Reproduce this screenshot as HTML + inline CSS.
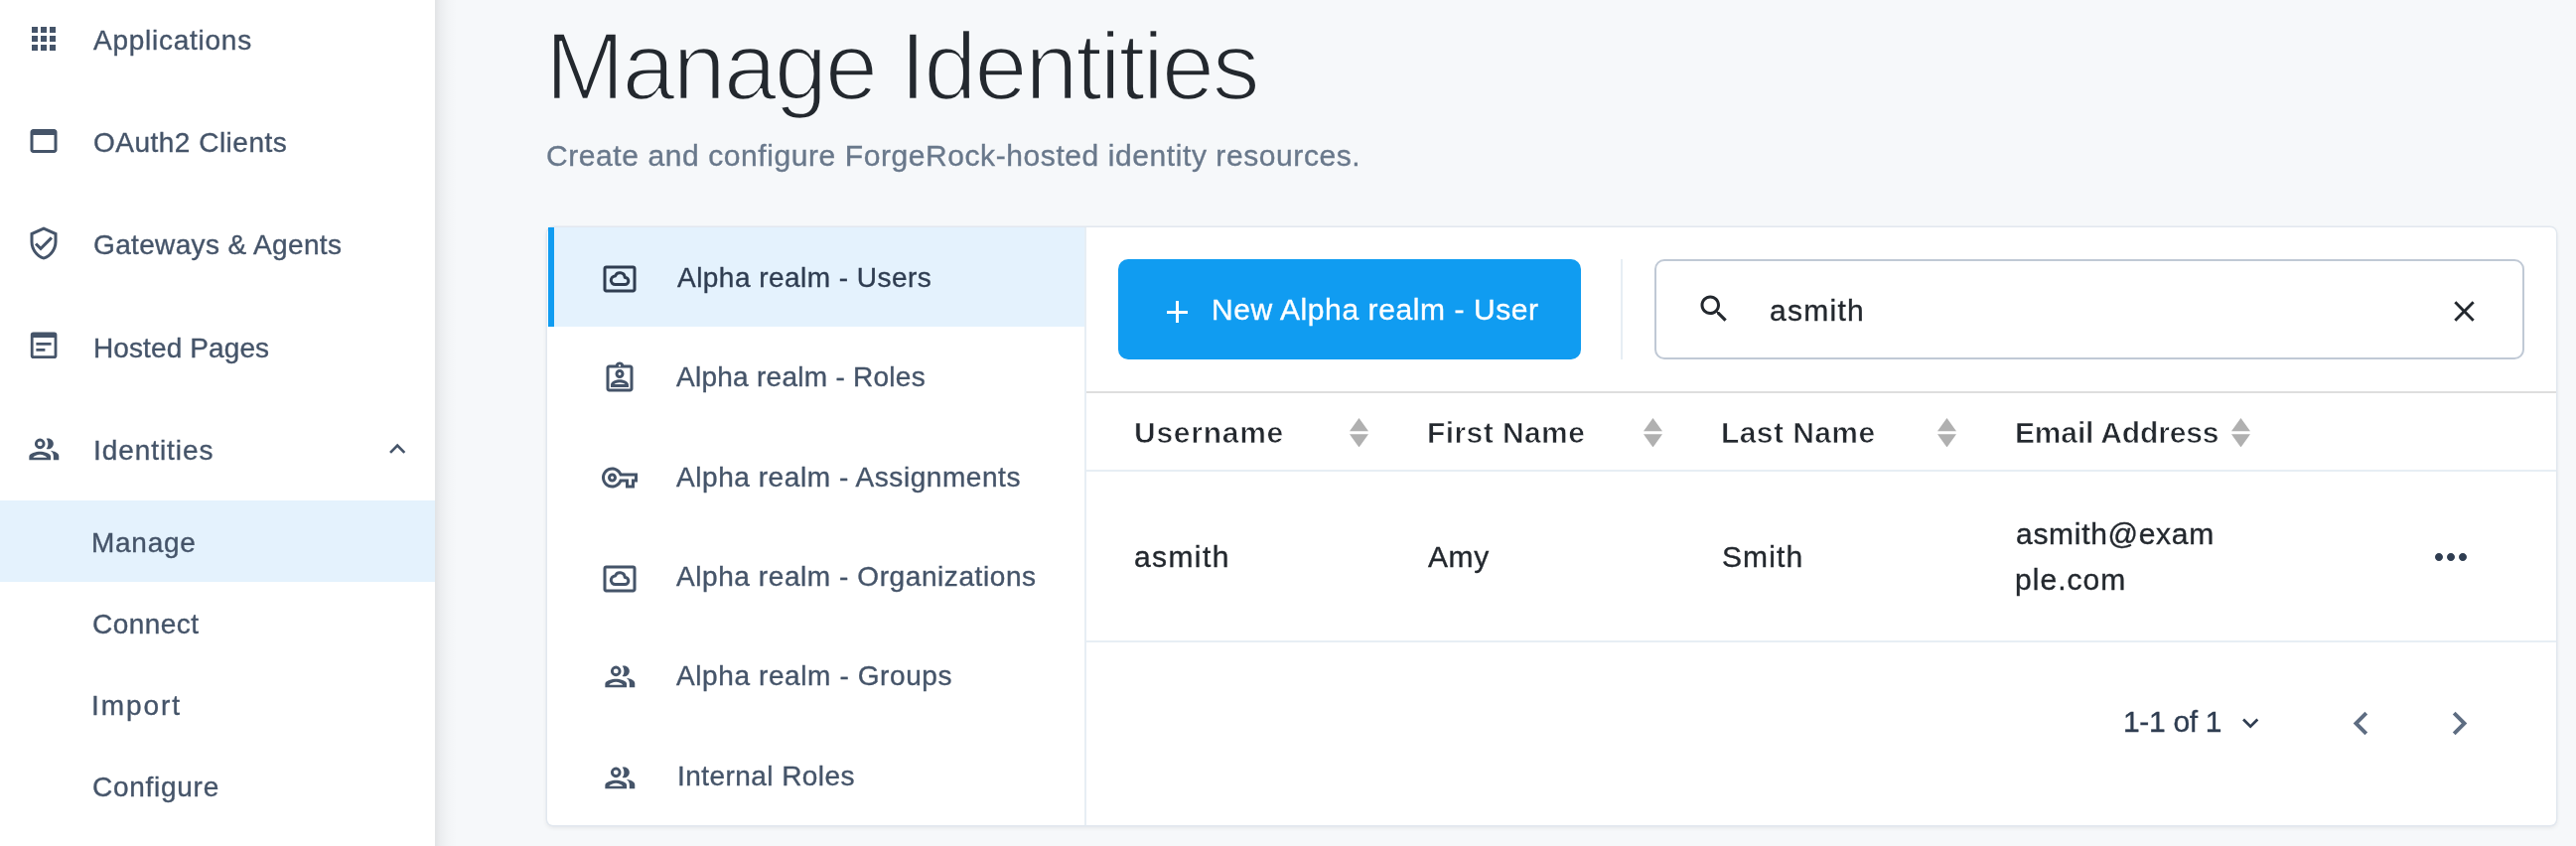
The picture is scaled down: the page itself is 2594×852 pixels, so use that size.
<!DOCTYPE html>
<html><head><meta charset="utf-8"><style>
html,body{margin:0;padding:0;}
body{width:2594px;height:852px;overflow:hidden;position:relative;background:#f6f8fa;font-family:"Liberation Sans", sans-serif;}
svg{display:block;}
</style></head><body>
<div style="position:absolute;left:0px;top:0px;width:438px;height:852px;background:#fff;"></div><div style="position:absolute;left:438px;top:0px;width:22px;height:852px;background:linear-gradient(to right, rgba(0,0,10,0.085), rgba(0,0,10,0.045) 25%, rgba(0,0,10,0.015) 60%, rgba(0,0,10,0) 100%);"></div><div style="position:absolute;left:0px;top:504px;width:438px;height:82px;background:#e4f2fd;"></div><div style="position:absolute;left:94.40px;top:26.80px;font-size:28px;line-height:28px;color:#455469;font-weight:400;letter-spacing:0.745px;white-space:nowrap;will-change:transform;-webkit-text-stroke:0.35px #455469;">Applications</div><div style="position:absolute;left:94.40px;top:130.05px;font-size:28px;line-height:28px;color:#455469;font-weight:400;letter-spacing:0.492px;white-space:nowrap;will-change:transform;-webkit-text-stroke:0.35px #455469;">OAuth2 Clients</div><div style="position:absolute;left:94.00px;top:233.30px;font-size:28px;line-height:28px;color:#455469;font-weight:400;letter-spacing:0.350px;white-space:nowrap;will-change:transform;-webkit-text-stroke:0.35px #455469;">Gateways &amp; Agents</div><div style="position:absolute;left:94.00px;top:336.55px;font-size:28px;line-height:28px;color:#455469;font-weight:400;letter-spacing:0.109px;white-space:nowrap;will-change:transform;-webkit-text-stroke:0.35px #455469;">Hosted Pages</div><div style="position:absolute;left:93.60px;top:439.80px;font-size:28px;line-height:28px;color:#455469;font-weight:400;letter-spacing:0.933px;white-space:nowrap;will-change:transform;-webkit-text-stroke:0.35px #455469;">Identities</div><svg style="position:absolute;left:26px;top:21px;" width="36" height="36" viewBox="0 0 24 24"><path fill="#455469" d="M4 8h4V4H4v4zm6 12h4v-4h-4v4zm-6 0h4v-4H4v4zm0-6h4v-4H4v4zm6 0h4v-4h-4v4zm6-10v4h4V4h-4zm-6 4h4V4h-4v4zm6 6h4v-4h-4v4zm0 6h4v-4h-4v4z"/></svg><svg style="position:absolute;left:25.8px;top:124px;" width="36" height="36" viewBox="0 0 24 24"><path fill="#455469" d="M19 4H5c-1.11 0-2 .9-2 2v12c0 1.1.89 2 2 2h14c1.1 0 2-.9 2-2V6c0-1.1-.89-2-2-2zm0 14H5V8h14v10z"/></svg><svg style="position:absolute;left:26.1px;top:227.1px;" width="36" height="36" viewBox="0 0 24 24"><path fill="#455469" d="M12 1L3 5v6c0 5.55 3.84 10.74 9 12 5.16-1.26 9-6.45 9-12V5l-9-4zm7 10c0 4.52-2.98 8.69-7 9.93-4.02-1.24-7-5.41-7-9.93V6.3l7-3.11 7 3.11V11zm-11.59.59L6 13l4 4 8-8-1.41-1.42L10 14.17z"/></svg><svg style="position:absolute;left:20px;top:320px" width="50" height="50" viewBox="20 320 50 50"><path fill="#455469" fill-rule="evenodd" d="M33.6 334.5H54.6a2.8 2.8 0 0 1 2.8 2.8V358.3a2.8 2.8 0 0 1-2.8 2.8H33.6a2.8 2.8 0 0 1-2.8-2.8V337.3a2.8 2.8 0 0 1 2.8-2.8zM33.6 340.1V358.2H54.6V340.1z"/><path fill="#455469" d="M36.4 345.1H51.6V347.8H36.4zM36.4 351H45.4V353.8H36.4z"/></svg><svg style="position:absolute;left:27.9px;top:435.5px" width="32.64" height="32.64" viewBox="0 0 24 24"><path fill="#455469" fill-rule="evenodd" d="M9 4.1a3.9 3.9 0 1 0 0 7.8a3.9 3.9 0 1 0 0-7.8zM9 6.2a1.8 1.8 0 1 0 0 3.6a1.8 1.8 0 1 0 0-3.6zM15 12c2.21 0 4-1.79 4-4s-1.79-4-4-4c-.47 0-.91.1-1.33.24.83 1.03 1.33 2.34 1.33 3.76s-.5 2.73-1.33 3.76c.42.14.86.24 1.33.24zM1 20v-2.6C1 15 6.3 13.8 9 13.8s8 1.2 8 3.6V20zM3.9 18.2C4.7 17 7 16 9 16s4.3 1 5.1 2.2zM16.67 13.13C18.04 14.06 19 15.32 19 17v3h4v-3c0-2.18-3.57-3.47-6.33-3.87z"/></svg><svg style="position:absolute;left:383.9px;top:435.5px;" width="32.4" height="32.4" viewBox="0 0 24 24"><path fill="#455469" d="M12 8l-6 6 1.41 1.41L12 10.83l4.59 4.58L18 14z"/></svg><div style="position:absolute;left:91.60px;top:532.80px;font-size:28px;line-height:28px;color:#455469;font-weight:400;letter-spacing:0.720px;white-space:nowrap;will-change:transform;-webkit-text-stroke:0.35px #455469;">Manage</div><div style="position:absolute;left:92.60px;top:614.80px;font-size:28px;line-height:28px;color:#455469;font-weight:400;letter-spacing:0.467px;white-space:nowrap;will-change:transform;-webkit-text-stroke:0.35px #455469;">Connect</div><div style="position:absolute;left:91.60px;top:696.80px;font-size:28px;line-height:28px;color:#455469;font-weight:400;letter-spacing:1.920px;white-space:nowrap;will-change:transform;-webkit-text-stroke:0.35px #455469;">Import</div><div style="position:absolute;left:92.60px;top:778.80px;font-size:28px;line-height:28px;color:#455469;font-weight:400;letter-spacing:0.725px;white-space:nowrap;will-change:transform;-webkit-text-stroke:0.35px #455469;">Configure</div><div style="position:absolute;left:549.00px;top:18.94px;font-size:96px;line-height:96px;color:#23282e;font-weight:400;letter-spacing:-2.375px;white-space:nowrap;will-change:transform;-webkit-text-stroke:2.6px #f6f8fa;">Manage Identities</div><div style="position:absolute;left:550.00px;top:142.40px;font-size:30px;line-height:30px;color:#69788b;font-weight:400;letter-spacing:0.582px;white-space:nowrap;will-change:transform;-webkit-text-stroke:0.35px #69788b;">Create and configure ForgeRock-hosted identity resources.</div><div style="position:absolute;left:551px;top:229px;width:2023px;height:602px;background:#fff;border-radius:6px;box-shadow:0 0 0 1.4px #e2e8ef, 0 2px 4px 1px rgba(0,0,0,0.07);"></div><div style="position:absolute;left:552px;top:229px;width:540px;height:100px;background:#e4f2fd;"></div><div style="position:absolute;left:552px;top:229px;width:6px;height:100px;background:#109cf1;"></div><div style="position:absolute;left:1092px;top:229px;width:2px;height:602px;background:#e7eef4;"></div><div style="position:absolute;left:681.60px;top:265.60px;font-size:28px;line-height:28px;color:#2f3d51;font-weight:400;letter-spacing:0.467px;white-space:nowrap;will-change:transform;-webkit-text-stroke:0.35px #2f3d51;">Alpha realm - Users</div><div style="position:absolute;left:681.00px;top:366.06px;font-size:28px;line-height:28px;color:#455469;font-weight:400;letter-spacing:0.267px;white-space:nowrap;will-change:transform;-webkit-text-stroke:0.35px #455469;">Alpha realm - Roles</div><div style="position:absolute;left:681.00px;top:466.52px;font-size:28px;line-height:28px;color:#455469;font-weight:400;letter-spacing:0.558px;white-space:nowrap;will-change:transform;-webkit-text-stroke:0.35px #455469;">Alpha realm - Assignments</div><div style="position:absolute;left:681.00px;top:566.98px;font-size:28px;line-height:28px;color:#455469;font-weight:400;letter-spacing:0.577px;white-space:nowrap;will-change:transform;-webkit-text-stroke:0.35px #455469;">Alpha realm - Organizations</div><div style="position:absolute;left:681.00px;top:667.44px;font-size:28px;line-height:28px;color:#455469;font-weight:400;letter-spacing:0.600px;white-space:nowrap;will-change:transform;-webkit-text-stroke:0.35px #455469;">Alpha realm - Groups</div><div style="position:absolute;left:681.80px;top:767.90px;font-size:28px;line-height:28px;color:#455469;font-weight:400;letter-spacing:0.446px;white-space:nowrap;will-change:transform;-webkit-text-stroke:0.35px #455469;">Internal Roles</div><svg style="position:absolute;left:606px;top:263px" width="36" height="36" viewBox="0 0 36 36"><path fill="#2f3d51" transform="scale(1.5)" d="M21 3H3c-1.11 0-2 .89-2 2v14c0 1.1.89 2 2 2h18c1.1 0 2-.9 2-2V5c0-1.11-.89-2-2-2zm0 16.01H3V4.99h18v14.02z"/><path fill="none" stroke="#2f3d51" stroke-width="3" stroke-linejoin="round" transform="translate(-606 -263)" d="M619.6 286.6A4.3 4.3 0 0 1 619.53 278A5 5 0 0 1 629.2 279.4A3.6 3.6 0 0 1 629.3 286.6Z"/></svg><svg style="position:absolute;left:606.2px;top:362.7px;" width="36" height="36" viewBox="0 0 24 24"><path fill="#455469" d="M19 3h-4.18C14.4 1.84 13.3 1 12 1s-2.4.84-2.82 2H5c-1.1 0-2 .9-2 2v14c0 1.1.9 2 2 2h14c1.1 0 2-.9 2-2V5c0-1.1-.9-2-2-2zm-7-.25c.41 0 .75.34.75.75s-.34.75-.75.75-.75-.34-.75-.75.34-.75.75-.75zM19 19H5V5h14v14zM12 6c-1.65 0-3 1.35-3 3s1.35 3 3 3 3-1.35 3-3-1.35-3-3-3zm0 4c-.55 0-1-.45-1-1s.45-1 1-1 1 .45 1 1-.45 1-1 1zm-6 6.47V18h12v-1.53c0-2.5-3.97-3.58-6-3.58s-6 1.07-6 3.58zM8.31 16c.69-.56 2.38-1.12 3.69-1.12s3.01.56 3.69 1.12H8.31z"/></svg><svg style="position:absolute;left:606.1px;top:462.9px;" width="36" height="36" viewBox="0 0 24 24"><path fill="#455469" d="M22 19h-6v-4h-2.68c-1.14 2.42-3.6 4-6.32 4-3.86 0-7-3.14-7-7s3.14-7 7-7c2.72 0 5.17 1.58 6.32 4H24v6h-2v4zm-4-2h2v-4h2v-2H11.94l-.23-.67C11.01 8.34 9.11 7 7 7c-2.76 0-5 2.24-5 5s2.24 5 5 5c2.11 0 4.01-1.34 4.71-3.33l.23-.67H18v4zM7 15c-1.65 0-3-1.35-3-3s1.35-3 3-3 3 1.35 3 3-1.35 3-3 3zm0-4c-.55 0-1 .45-1 1s.45 1 1 1 1-.45 1-1-.45-1-1-1z"/></svg><svg style="position:absolute;left:606px;top:564.5px" width="36" height="36" viewBox="0 0 36 36"><path fill="#455469" transform="scale(1.5)" d="M21 3H3c-1.11 0-2 .89-2 2v14c0 1.1.89 2 2 2h18c1.1 0 2-.9 2-2V5c0-1.11-.89-2-2-2zm0 16.01H3V4.99h18v14.02z"/><path fill="none" stroke="#455469" stroke-width="3" stroke-linejoin="round" transform="translate(-606 -263)" d="M619.6 286.6A4.3 4.3 0 0 1 619.53 278A5 5 0 0 1 629.2 279.4A3.6 3.6 0 0 1 629.3 286.6Z"/></svg><svg style="position:absolute;left:607.8px;top:665.3px" width="32.64" height="32.64" viewBox="0 0 24 24"><path fill="#455469" fill-rule="evenodd" d="M9 4.1a3.9 3.9 0 1 0 0 7.8a3.9 3.9 0 1 0 0-7.8zM9 6.2a1.8 1.8 0 1 0 0 3.6a1.8 1.8 0 1 0 0-3.6zM15 12c2.21 0 4-1.79 4-4s-1.79-4-4-4c-.47 0-.91.1-1.33.24.83 1.03 1.33 2.34 1.33 3.76s-.5 2.73-1.33 3.76c.42.14.86.24 1.33.24zM1 20v-2.6C1 15 6.3 13.8 9 13.8s8 1.2 8 3.6V20zM3.9 18.2C4.7 17 7 16 9 16s4.3 1 5.1 2.2zM16.67 13.13C18.04 14.06 19 15.32 19 17v3h4v-3c0-2.18-3.57-3.47-6.33-3.87z"/></svg><svg style="position:absolute;left:608.1px;top:766.7px" width="32.64" height="32.64" viewBox="0 0 24 24"><path fill="#455469" fill-rule="evenodd" d="M9 4.1a3.9 3.9 0 1 0 0 7.8a3.9 3.9 0 1 0 0-7.8zM9 6.2a1.8 1.8 0 1 0 0 3.6a1.8 1.8 0 1 0 0-3.6zM15 12c2.21 0 4-1.79 4-4s-1.79-4-4-4c-.47 0-.91.1-1.33.24.83 1.03 1.33 2.34 1.33 3.76s-.5 2.73-1.33 3.76c.42.14.86.24 1.33.24zM1 20v-2.6C1 15 6.3 13.8 9 13.8s8 1.2 8 3.6V20zM3.9 18.2C4.7 17 7 16 9 16s4.3 1 5.1 2.2zM16.67 13.13C18.04 14.06 19 15.32 19 17v3h4v-3c0-2.18-3.57-3.47-6.33-3.87z"/></svg><div style="position:absolute;left:1126px;top:261px;width:466px;height:101px;background:#109cf1;border-radius:10px;"></div><div style="position:absolute;left:1175px;top:312.9px;width:21.3px;height:3px;background:#fff;"></div><div style="position:absolute;left:1184.2px;top:303.3px;width:3px;height:21.3px;background:#fff;"></div><div style="position:absolute;left:1220.00px;top:297.11px;font-size:30px;line-height:30px;color:#fff;font-weight:400;letter-spacing:0.581px;white-space:nowrap;will-change:transform;-webkit-text-stroke:0.35px #fff;">New Alpha realm - User</div><div style="position:absolute;left:1632px;top:261px;width:2px;height:101px;background:#e7eef4;"></div><div style="position:absolute;left:1666px;top:261px;width:876px;height:101px;box-sizing:border-box;border:2px solid #c0c9d5;border-radius:10px;background:#fff;"></div><svg style="position:absolute;left:1707.6px;top:292.9px;" width="36" height="36" viewBox="0 0 24 24"><path fill="#23282e" d="M15.5 14h-.79l-.28-.27C15.41 12.59 16 11.11 16 9.5 16 5.91 13.09 3 9.5 3S3 5.91 3 9.5 5.91 16 9.5 16c1.61 0 3.09-.59 4.23-1.57l.27.28v.79l5 4.99L20.49 19l-4.99-5zm-6 0C7.01 14 5 11.99 5 9.5S7.01 5 9.5 5 14 7.01 14 9.5 11.99 14 9.5 14z"/></svg><div style="position:absolute;left:1781.60px;top:297.61px;font-size:30px;line-height:30px;color:#23282e;font-weight:400;letter-spacing:1.280px;white-space:nowrap;will-change:transform;-webkit-text-stroke:0.35px #23282e;">asmith</div><svg style="position:absolute;left:2464.4px;top:296.2px;" width="35" height="35" viewBox="0 0 24 24"><path fill="#23282e" d="M19 6.41L17.59 5 12 10.59 6.41 5 5 6.41 10.59 12 5 17.59 6.41 19 12 13.41 17.59 19 19 17.59 13.41 12z"/></svg><div style="position:absolute;left:1094px;top:394px;width:1480px;height:2px;background:#dedede;"></div><div style="position:absolute;left:1141.80px;top:421.11px;font-size:30px;line-height:30px;color:#23282e;font-weight:700;letter-spacing:0.743px;white-space:nowrap;will-change:transform;-webkit-text-stroke:0.7px #fff;">Username</div><div style="position:absolute;left:1437.20px;top:421.11px;font-size:30px;line-height:30px;color:#23282e;font-weight:700;letter-spacing:0.422px;white-space:nowrap;will-change:transform;-webkit-text-stroke:0.7px #fff;">First Name</div><div style="position:absolute;left:1733.40px;top:421.11px;font-size:30px;line-height:30px;color:#23282e;font-weight:700;letter-spacing:0.425px;white-space:nowrap;will-change:transform;-webkit-text-stroke:0.7px #fff;">Last Name</div><div style="position:absolute;left:2029.10px;top:421.11px;font-size:30px;line-height:30px;color:#23282e;font-weight:700;letter-spacing:-0.158px;white-space:nowrap;will-change:transform;-webkit-text-stroke:0.7px #fff;">Email Address</div><svg style="position:absolute;left:1358.7px;top:420.5px" width="19" height="29.5" viewBox="0 0 19 29.5"><path fill="#b0b0b0" d="M9.5 0L19 13.2H0z M0 16.3H19L9.5 29.5z"/></svg><svg style="position:absolute;left:1654.7px;top:420.5px" width="19" height="29.5" viewBox="0 0 19 29.5"><path fill="#b0b0b0" d="M9.5 0L19 13.2H0z M0 16.3H19L9.5 29.5z"/></svg><svg style="position:absolute;left:1950.7px;top:420.5px" width="19" height="29.5" viewBox="0 0 19 29.5"><path fill="#b0b0b0" d="M9.5 0L19 13.2H0z M0 16.3H19L9.5 29.5z"/></svg><svg style="position:absolute;left:2246.9px;top:420.5px" width="19" height="29.5" viewBox="0 0 19 29.5"><path fill="#b0b0b0" d="M9.5 0L19 13.2H0z M0 16.3H19L9.5 29.5z"/></svg><div style="position:absolute;left:1094px;top:473px;width:1480px;height:2px;background:#e7eef4;"></div><div style="position:absolute;left:1141.80px;top:546.40px;font-size:30px;line-height:30px;color:#23282e;font-weight:400;letter-spacing:1.400px;white-space:nowrap;will-change:transform;-webkit-text-stroke:0.35px #23282e;">asmith</div><div style="position:absolute;left:1437.80px;top:546.40px;font-size:30px;line-height:30px;color:#23282e;font-weight:400;letter-spacing:0.600px;white-space:nowrap;will-change:transform;-webkit-text-stroke:0.35px #23282e;">Amy</div><div style="position:absolute;left:1733.60px;top:546.40px;font-size:30px;line-height:30px;color:#23282e;font-weight:400;letter-spacing:1.100px;white-space:nowrap;will-change:transform;-webkit-text-stroke:0.35px #23282e;">Smith</div><div style="position:absolute;left:2030.20px;top:523.00px;font-size:30px;line-height:30px;color:#23282e;font-weight:400;letter-spacing:0.700px;white-space:nowrap;will-change:transform;-webkit-text-stroke:0.35px #23282e;">asmith@exam</div><div style="position:absolute;left:2029.00px;top:568.70px;font-size:30px;line-height:30px;color:#23282e;font-weight:400;letter-spacing:1.033px;white-space:nowrap;will-change:transform;-webkit-text-stroke:0.35px #23282e;">ple.com</div><svg style="position:absolute;left:2444px;top:536.9px;" width="48" height="48" viewBox="0 0 24 24"><path fill="#2f3d51" d="M6 10c-1.1 0-2 .9-2 2s.9 2 2 2 2-.9 2-2-.9-2-2-2zm12 0c-1.1 0-2 .9-2 2s.9 2 2 2 2-.9 2-2-.9-2-2-2zm-6 0c-1.1 0-2 .9-2 2s.9 2 2 2 2-.9 2-2-.9-2-2-2z"/></svg><div style="position:absolute;left:1094px;top:645px;width:1480px;height:2px;background:#e7eef4;"></div><div style="position:absolute;left:2137.80px;top:712.11px;font-size:30px;line-height:30px;color:#2f3d51;font-weight:400;letter-spacing:-0.314px;white-space:nowrap;will-change:transform;-webkit-text-stroke:0.35px #2f3d51;">1-1 of 1</div><svg style="position:absolute;left:2249.9px;top:712.4px;" width="32.4" height="32.4" viewBox="0 0 24 24"><path fill="#2f3d51" d="M16.59 8.59L12 13.17 7.41 8.59 6 10l6 6 6-6z"/></svg><svg style="position:absolute;left:2354.3px;top:704.7px;" width="47" height="47" viewBox="0 0 24 24"><path fill="#5e6d82" d="M15.41 7.41L14 6l-6 6 6 6 1.41-1.41L10.83 12z"/></svg><svg style="position:absolute;left:2452.7px;top:704.7px;" width="47" height="47" viewBox="0 0 24 24"><path fill="#5e6d82" d="M10 6L8.59 7.41 13.17 12l-4.58 4.59L10 18l6-6z"/></svg>
</body></html>
